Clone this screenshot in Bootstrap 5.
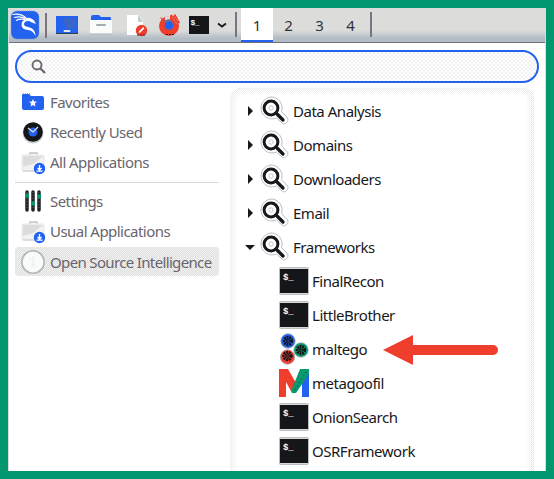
<!DOCTYPE html>
<html lang="en">
<head>
<meta charset="utf-8">
<title>Application menu</title>
<link href="https://cdn.jsdelivr.net/npm/bootstrap@5.3.0/dist/css/bootstrap.min.css" rel="stylesheet">
<style>
html,body{height:479px;overflow:hidden}
body{background:#03976f;padding:8px 8.5px 8px 8px;font:15px/20px "Noto Sans",sans-serif;color:#18181c}
svg{display:block;flex:none}
.desk{height:463px;background:#fff;border-left:1px solid #d5dcdc;border-right:1px solid #d5dcdc}
.topbar{height:35px;border-bottom:1px solid #746f79;background:linear-gradient(#dcdcda 0 66%,#b1bcc4 90%)}
.sep{width:2px;height:25px;background:#7b737f}
.space{width:31px;height:34px;text-align:center;padding-top:7px;font-size:15px;color:#333139}
.space.on{width:32px;background:#fff;border-bottom:2px solid #2262ef}
.finder{margin:7px 6px 0;height:33px;border:2px solid #2262ef;border-radius:17px;padding:0 0 0 14px;background:radial-gradient(circle at 1px 1px,#dfdfdf 0 .6px,transparent .8px) 0 0/4px 4px,radial-gradient(circle at 1px 1px,#e6e6e6 0 .6px,transparent .8px) 2px 2px/4px 4px,#fff}
.side{width:204px;margin:4px 0 0 6px;color:#69656e;letter-spacing:-.54px}
.entry{height:30px;padding-left:6px;gap:4px;white-space:nowrap}
.entry svg{width:25px;height:26px}
.rule{height:1px;background:#d9d9d9;margin:5px 0 3px}
.chosen{height:29px;margin-top:1px;border-radius:4px;letter-spacing:-.65px;background:conic-gradient(#dededd 25%,#f2f2f2 0 50%,#dededd 0 75%,#f2f2f2 0) 0 0/2px 2px}
.results{width:304px;height:383px;margin-left:11px;margin-top:5px;padding:6px 7px 0;border-radius:10px 10px 0 0;overflow:hidden;background:conic-gradient(#dcdcdc 25%,#fff 0 50%,#eaeaea 0 75%,#fff 0) 0 0/2px 2px}
.sheet{height:389px;background:#fff;border-radius:6px;box-shadow:0 0 6px 3px #fff;padding-left:8px;letter-spacing:-.47px}
.line{height:34px;white-space:nowrap}
.line .tri{width:10px;height:10px;margin-right:4px}
.line .lens{margin-right:4px}
.kid{padding-left:34px;gap:3px}
.pointer{left:383px;top:334px;z-index:2}
</style>
<script src="https://cdn.jsdelivr.net/npm/bootstrap@5.3.0/dist/js/bootstrap.bundle.min.js"></script>
</head>
<body>
<svg width="0" height="0" class="position-absolute">
<defs>
<symbol id="lens" viewBox="0 0 30 30"><path d="M12 1a11 11 0 0 1 10.500 14.500l6 6.500c2 3-2.500 7-5 5.500l-6-5.500A11 11 0 1 1 12 1z" fill="#fff" stroke="#b3bfc4"/><circle cx="12" cy="12" r="6.900" fill="#fff" stroke="#18181c" stroke-width="3"/><circle cx="12" cy="12" r="2.200" fill="none" stroke="#c1cacd" stroke-width="1"/><path d="M17 17l2 2" stroke="#18181c" stroke-width="2.500"/><path d="M18.500 18.500l5.500 5.500" stroke="#18181c" stroke-width="3.300" stroke-linecap="round"/></symbol>
<symbol id="term" viewBox="0 0 30 28"><rect x=".5" y=".5" width="29" height="27" rx="1" fill="#d9dad9" stroke="#b9bfc1"/><rect x="1" y="2" width="28" height="24" fill="#15161a"/><text x="4" y="13" font-family="Liberation Mono,monospace" font-size="9" font-weight="bold" fill="#fff" letter-spacing="-.2">$_</text></symbol>
<symbol id="apps" viewBox="0 0 25 26"><path d="M9 6V4h7v2" fill="none" stroke="#bcc4c7" stroke-width="1.300"/><rect x="1" y="6" width="22" height="16" rx="1" fill="#f2f2f1" stroke="#e7e7e7"/><path d="M2 7h20L12 15l-10 3z" fill="#dcdcda"/><path d="M2 22h13" stroke="#c5cccf"/><circle cx="18.500" cy="19.500" r="5.700" fill="#2262ef"/><path d="M18.500 16v5M16.500 19l2 2 2-2M15.500 22.200h6" fill="none" stroke="#fff" stroke-width="1.300"/></symbol>
<symbol id="right" viewBox="0 0 10 10"><path d="M3 0l5 5-5 5z" fill="#18181c"/></symbol>
<symbol id="down" viewBox="0 0 10 10"><path d="M0 3h10L5 8z" fill="#18181c"/></symbol>
</defs></svg>
<main class="desk">
<nav class="topbar d-flex">
<svg width="222" height="34" viewBox="9 8 222 34">
<rect x="11" y="11" width="28" height="28" rx="6" fill="#2262ef" stroke="#7f9bd0" stroke-dasharray="1 1"/>
<path d="M12.500 14.500c6-1 10 0 13.500 3.500M14 17.500c4-1 8-1 11 1M16 20.500c3-1.500 6-1.500 9-1" fill="none" stroke="#fff" stroke-width="1.200"/><path d="M24.500 18.500c4-2 8 0 9.500 2l2 3.500-4-1.500-3-1.500c-3-.5-5 1-5 3 0 3 4 2.500 7 4 3 1.200 4.500 4 4.500 8-2-4-4-5.500-7.500-6-4-.5-6.500-2-6.500-5.500 0-2.500 1.500-4.500 4-5z" fill="#fff"/>
<path d="M46 13v25" stroke="#7b737f" stroke-width="2"/>
<rect x="56" y="16" width="22" height="18" fill="#2262ef"/><path d="M62 18h14v11h-10z" fill="#4668b2" opacity=".6"/><path d="M56 33.500h22" stroke="#36404d"/><path d="M64 31.500h6v-1h-6z" fill="none" stroke="#dfe7ef"/>
<path d="M91 17q0-2 2-2h6l2 2h9q1 0 1 2v2H91z" fill="#2262ef"/><path d="M103 19h8" stroke="#08776b" stroke-dasharray="1 1"/><rect x="90" y="20" width="22" height="14" rx="1" fill="#fbfbfa"/><path d="M90 34h22" stroke="#a9b4b9"/><path d="M97 25h8" stroke="#a4afb5" stroke-width="2" stroke-linecap="round"/>
<path d="M127 15h11l5 6v14h-16z" fill="#fff"/><path d="M138 15l5 7h-5z" fill="#c1cbd0"/><circle cx="141.500" cy="30.500" r="5.700" fill="#ee3e2d"/><path d="M138.500 33l.8-2 4.200-4 .8 1.500-4 4z" fill="#fff"/><path d="M137 35h8" stroke="#421f20" stroke-dasharray="2 1"/>
<circle cx="169" cy="26" r="10" fill="#f03e2d"/><path d="M160 17l4 2h8l-3 3h-6z" fill="#f03e2d"/><path d="M165 16.500l5-.5v4h-5z" fill="#dcdcda"/><path d="M164 20.500l5-1.500 5 4-5-1-3 3z" fill="#73728c"/><circle cx="169" cy="25.500" r="4.300" fill="#2262ef"/><path d="M171 15l2 4 2-3 4 7" fill="none" stroke="#ee3e2d" stroke-width="2.400"/><path d="M172 17l5 7M175 17l3 4" stroke="#eeb5ad" stroke-width=".8" stroke-dasharray="1 1"/><path d="M166 34.500h8" stroke="#341817" stroke-dasharray="2 1"/>
<rect x="189" y="16" width="20" height="18" fill="#15161a"/><text x="190.500" y="25" font-family="Liberation Mono,monospace" font-size="8" font-weight="bold" fill="#fff" letter-spacing="-.5">$_</text>
<path d="M218 23.500l4 3 4-3" fill="none" stroke="#18181c" stroke-width="1.800"/></svg>
<div class="sep mt-1" style="margin-left:4px"></div>
<div class="space on ms-1">1</div><div class="space">2</div><div class="space">3</div><div class="space">4</div><div class="sep mt-1 ms-1"></div>
</nav>
<div class="finder d-flex align-items-center"><svg width="16" height="16" viewBox="0 0 16 16" fill="none" stroke="#6d6670"><circle cx="6" cy="6" r="4.500" stroke-width="1.900"/><path d="M9.500 9.500l4.500 4.500" stroke-width="2.300"/></svg></div>
<div class="d-flex">
<aside class="side">
<div class="entry d-flex align-items-center"><svg viewBox="0 0 25 26"><path d="M1 6q0-1 1-1h6l2 2h11q2 0 2 2v10q0 2-2 2H3q-2 0-2-2z" fill="#2262ef"/><path d="M2 5h7" stroke="#466994" stroke-dasharray="1 1"/><path d="M12 10l1.100 2.600 2.900.2-2.200 1.800.7 2.900-2.500-1.600-2.500 1.600.7-2.900L8 12.800l2.900-.2z" fill="#fff"/></svg><span>Favorites</span></div>
<div class="entry d-flex align-items-center"><svg viewBox="0 0 25 26"><circle cx="12" cy="14" r="10.500" fill="#ccd2d4"/><circle cx="12" cy="13" r="9.800" fill="#15161a"/><circle cx="12" cy="13" r="4.500" fill="#2262ef"/><path d="M7 9l5 4 5-5" fill="none" stroke="#dfe4e8" stroke-width="1.300"/></svg><span>Recently Used</span></div>
<div class="entry d-flex align-items-center"><svg><use href="#apps"/></svg><span>All Applications</span></div>
<div class="rule"></div>
<div class="entry d-flex align-items-center"><svg viewBox="0 0 25 26"><path d="M6 4v18M12 4v18M18 4v18" stroke="#202225" stroke-width="3.500" stroke-linecap="round"/><path d="M6 4v18M12 4v18M18 4v18" stroke="#555a5b" stroke-dasharray="1 2"/><path d="M4 7.500h4M10 15.500h4M16 8.500h4" stroke="#08996f" stroke-width="4"/></svg><span>Settings</span></div>
<div class="entry d-flex align-items-center"><svg><use href="#apps"/></svg><span>Usual Applications</span></div>
<div class="entry chosen d-flex align-items-center"><svg viewBox="0 0 25 26"><circle cx="12" cy="13" r="11.200" fill="#fafafa" stroke="#abb7bc" stroke-width="1.600"/><path d="M12 7v12M9 10h2M13 15h2" stroke="#dededd" stroke-dasharray="1 1"/></svg><span>Open Source Intelligence</span></div>
</aside>
<section class="results"><div class="sheet">
<div class="line d-flex align-items-center"><svg class="tri"><use href="#right"/></svg><svg class="lens" width="30" height="30"><use href="#lens"/></svg><span>Data Analysis</span></div>
<div class="line d-flex align-items-center"><svg class="tri"><use href="#right"/></svg><svg class="lens" width="30" height="30"><use href="#lens"/></svg><span>Domains</span></div>
<div class="line d-flex align-items-center"><svg class="tri"><use href="#right"/></svg><svg class="lens" width="30" height="30"><use href="#lens"/></svg><span>Downloaders</span></div>
<div class="line d-flex align-items-center"><svg class="tri"><use href="#right"/></svg><svg class="lens" width="30" height="30"><use href="#lens"/></svg><span>Email</span></div>
<div class="line d-flex align-items-center"><svg class="tri"><use href="#down"/></svg><svg class="lens" width="30" height="30"><use href="#lens"/></svg><span>Frameworks</span></div>
<div class="line kid d-flex align-items-center"><svg width="30" height="28"><use href="#term"/></svg><span>FinalRecon</span></div>
<div class="line kid d-flex align-items-center"><svg width="30" height="28"><use href="#term"/></svg><span>LittleBrother</span></div>
<div class="line kid d-flex align-items-center"><svg width="30" height="32" viewBox="0 0 30 32"><g stroke="#9aa6ab" stroke-width=".7"><circle cx="9" cy="8" r="7.200" fill="#2262ef"/><circle cx="22" cy="17" r="7.200" fill="#08996f"/><circle cx="8.500" cy="24" r="7.200" fill="#f03e2d"/></g><g fill="none" stroke="#15161a" stroke-width="5" stroke-dasharray="1.400 .5"><circle cx="9" cy="8" r="2.700"/><circle cx="22" cy="17" r="2.700"/><circle cx="8.500" cy="23" r="2.700"/></g></svg><span>maltego</span></div>
<div class="line kid d-flex align-items-center"><svg width="30" height="28" viewBox="0 0 30 28"><path d="M0 0h7v28H0z" fill="#f03e2d"/><path d="M23 0h7v28h-7z" fill="#2262ef"/><path d="M0 0h9l8 14-4 10z" fill="#f03e2d"/><path d="M21 0h9v5L17 24h-4v-4z" fill="#08996f"/><path d="M27 3L15 22" stroke="#153b37" stroke-dasharray="1 3"/></svg><span>metagoofil</span></div>
<div class="line kid d-flex align-items-center"><svg width="30" height="28"><use href="#term"/></svg><span>OnionSearch</span></div>
<div class="line kid d-flex align-items-center"><svg width="30" height="28"><use href="#term"/></svg><span>OSRFramework</span></div>
</div></section>
</div>
</main>
<svg class="pointer position-absolute" width="116" height="32" viewBox="0 0 116 32"><path d="M0 16L30 1v10h80a5 5 0 0 1 0 10H30v10z" fill="#f03e2d"/></svg>
</body>
</html>
